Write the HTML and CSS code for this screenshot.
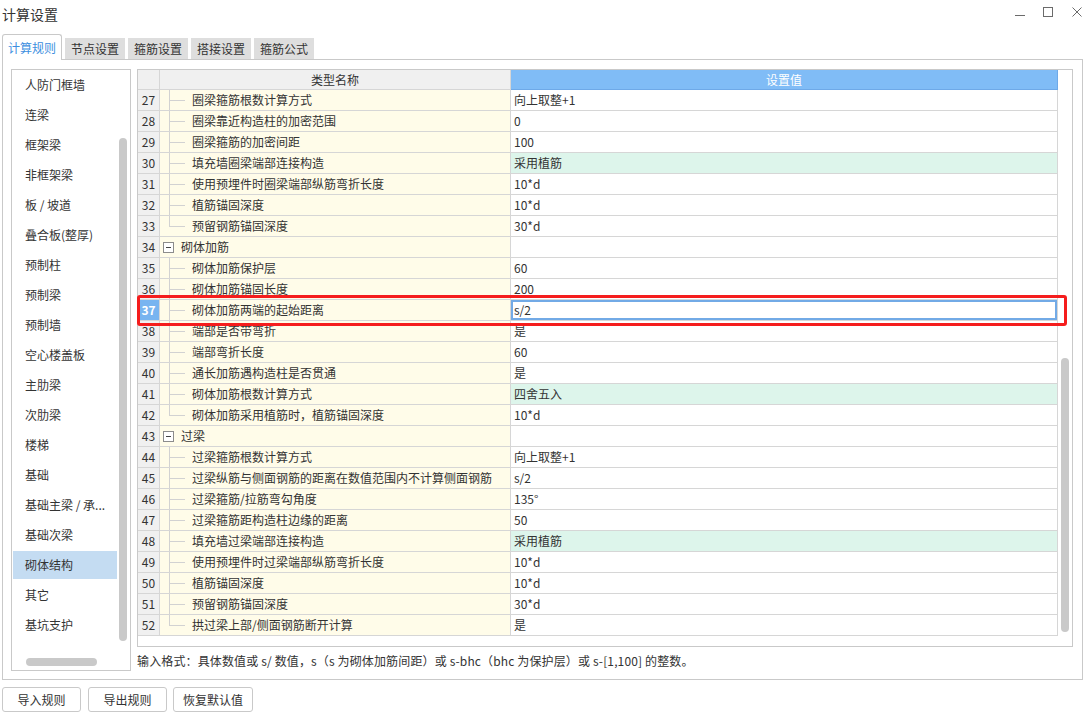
FILE: index.html
```html
<!DOCTYPE html>
<html lang="zh-CN">
<head>
<meta charset="utf-8">
<title>计算设置</title>
<link rel="stylesheet" href="styles.css">
</head>
<body>
<div class="window">
  <header class="titlebar">
    <div class="title">计算设置</div>
    <div class="controls">
      <svg class="ctl" width="10" height="10" viewBox="0 0 10 10"><path d="M0 8.5H10" stroke="#6b6b6b" stroke-width="1"/></svg>
      <svg class="ctl" width="10" height="10" viewBox="0 0 10 10"><rect x="0.5" y="0.5" width="9" height="9" fill="none" stroke="#6b6b6b" stroke-width="1"/></svg>
      <svg class="ctl close" width="10" height="10" viewBox="0 0 10 10"><path d="M0.5 0.5L9.5 9.5M9.5 0.5L0.5 9.5" stroke="#6b6b6b" stroke-width="1"/></svg>
    </div>
  </header>

  <nav class="tabs">
    <div class="tab active">计算规则</div>
    <div class="tab">节点设置</div>
    <div class="tab">箍筋设置</div>
    <div class="tab">搭接设置</div>
    <div class="tab">箍筋公式</div>
  </nav>

  <section class="panel">
    <aside class="sidebar">
      <div class="side-main">
        <ul class="side-list">
          <li class="side-item">人防门框墙</li>
          <li class="side-item">连梁</li>
          <li class="side-item">框架梁</li>
          <li class="side-item">非框架梁</li>
          <li class="side-item">板 / 坡道</li>
          <li class="side-item">叠合板(整厚)</li>
          <li class="side-item">预制柱</li>
          <li class="side-item">预制梁</li>
          <li class="side-item">预制墙</li>
          <li class="side-item">空心楼盖板</li>
          <li class="side-item">主肋梁</li>
          <li class="side-item">次肋梁</li>
          <li class="side-item">楼梯</li>
          <li class="side-item">基础</li>
          <li class="side-item">基础主梁 / 承...</li>
          <li class="side-item">基础次梁</li>
          <li class="side-item sel">砌体结构</li>
          <li class="side-item">其它</li>
          <li class="side-item">基坑支护</li>
        </ul>
        <div class="vscroll"><div class="thumb vthumb"></div></div>
      </div>
      <div class="hscroll"><div class="thumb hthumb"></div></div>
    </aside>

    <div class="content">
      <div class="grid-box">
        <div class="grid">
          <div class="row head">
            <div class="c-num"></div>
            <div class="c-name">类型名称</div>
            <div class="c-val">设置值</div>
          </div>
          <div class="row"><div class="c-num">27</div><div class="c-name"><span class="tree"></span>圈梁箍筋根数计算方式</div><div class="c-val">向上取整+1</div></div>
          <div class="row"><div class="c-num">28</div><div class="c-name"><span class="tree"></span>圈梁靠近构造柱的加密范围</div><div class="c-val">0</div></div>
          <div class="row"><div class="c-num">29</div><div class="c-name"><span class="tree"></span>圈梁箍筋的加密间距</div><div class="c-val">100</div></div>
          <div class="row"><div class="c-num">30</div><div class="c-name"><span class="tree"></span>填充墙圈梁端部连接构造</div><div class="c-val green">采用植筋</div></div>
          <div class="row"><div class="c-num">31</div><div class="c-name"><span class="tree"></span>使用预埋件时圈梁端部纵筋弯折长度</div><div class="c-val">10*d</div></div>
          <div class="row"><div class="c-num">32</div><div class="c-name"><span class="tree"></span>植筋锚固深度</div><div class="c-val">10*d</div></div>
          <div class="row"><div class="c-num">33</div><div class="c-name"><span class="tree last"></span>预留钢筋锚固深度</div><div class="c-val">30*d</div></div>
          <div class="row"><div class="c-num">34</div><div class="c-name group"><span class="toggle"></span>砌体加筋</div><div class="c-val"></div></div>
          <div class="row"><div class="c-num">35</div><div class="c-name"><span class="tree"></span>砌体加筋保护层</div><div class="c-val">60</div></div>
          <div class="row"><div class="c-num">36</div><div class="c-name"><span class="tree"></span>砌体加筋锚固长度</div><div class="c-val">200</div></div>
          <div class="row sel"><div class="c-num">37</div><div class="c-name"><span class="tree"></span>砌体加筋两端的起始距离</div><div class="c-val edit">s/2</div></div>
          <div class="row"><div class="c-num">38</div><div class="c-name"><span class="tree"></span>端部是否带弯折</div><div class="c-val">是</div></div>
          <div class="row"><div class="c-num">39</div><div class="c-name"><span class="tree"></span>端部弯折长度</div><div class="c-val">60</div></div>
          <div class="row"><div class="c-num">40</div><div class="c-name"><span class="tree"></span>通长加筋遇构造柱是否贯通</div><div class="c-val">是</div></div>
          <div class="row"><div class="c-num">41</div><div class="c-name"><span class="tree"></span>砌体加筋根数计算方式</div><div class="c-val green">四舍五入</div></div>
          <div class="row"><div class="c-num">42</div><div class="c-name"><span class="tree last"></span>砌体加筋采用植筋时，植筋锚固深度</div><div class="c-val">10*d</div></div>
          <div class="row"><div class="c-num">43</div><div class="c-name group"><span class="toggle"></span>过梁</div><div class="c-val"></div></div>
          <div class="row"><div class="c-num">44</div><div class="c-name"><span class="tree"></span>过梁箍筋根数计算方式</div><div class="c-val">向上取整+1</div></div>
          <div class="row"><div class="c-num">45</div><div class="c-name"><span class="tree"></span>过梁纵筋与侧面钢筋的距离在数值范围内不计算侧面钢筋</div><div class="c-val">s/2</div></div>
          <div class="row"><div class="c-num">46</div><div class="c-name"><span class="tree"></span>过梁箍筋/拉筋弯勾角度</div><div class="c-val">135°</div></div>
          <div class="row"><div class="c-num">47</div><div class="c-name"><span class="tree"></span>过梁箍筋距构造柱边缘的距离</div><div class="c-val">50</div></div>
          <div class="row"><div class="c-num">48</div><div class="c-name"><span class="tree"></span>填充墙过梁端部连接构造</div><div class="c-val green">采用植筋</div></div>
          <div class="row"><div class="c-num">49</div><div class="c-name"><span class="tree"></span>使用预埋件时过梁端部纵筋弯折长度</div><div class="c-val">10*d</div></div>
          <div class="row"><div class="c-num">50</div><div class="c-name"><span class="tree"></span>植筋锚固深度</div><div class="c-val">10*d</div></div>
          <div class="row"><div class="c-num">51</div><div class="c-name"><span class="tree"></span>预留钢筋锚固深度</div><div class="c-val">30*d</div></div>
          <div class="row"><div class="c-num">52</div><div class="c-name"><span class="tree last"></span>拱过梁上部/侧面钢筋断开计算</div><div class="c-val">是</div></div>
        </div>
        <div class="gscroll"><div class="thumb gthumb"></div></div>
        <div class="highlight"></div>
      </div>
      <p class="hint">输入格式：具体数值或 s/ 数值，s（s 为砌体加筋间距）或 s-bhc（bhc 为保护层）或 s-[1,100] 的整数。</p>
    </div>
  </section>

  <footer class="buttons">
    <button class="btn">导入规则</button>
    <button class="btn">导出规则</button>
    <button class="btn wide">恢复默认值</button>
  </footer>
</div>
</body>
</html>
```

FILE: styles.css
```css
* {
  box-sizing: border-box;
  margin: 0;
  padding: 0;
}

html, body {
  width: 1089px;
  height: 713px;
  overflow: hidden;
  background: #fff;
}

body {
  font-family: "Microsoft YaHei", "Noto Sans CJK SC", sans-serif;
  font-size: 12px;
  color: #333;
}

/* title bar */
.titlebar {
  display: flex;
  justify-content: space-between;
  height: 34px;
}

.title {
  font-size: 14px;
  line-height: 28px;
  padding-left: 2px;
  color: #333;
}

.controls {
  display: flex;
  gap: 18px;
  padding: 7px 7px 0 0;
}

.ctl {
  display: block;
}

.ctl.close {
  margin-left: 1px;
}

/* tabs */
.tabs {
  display: flex;
  align-items: flex-end;
  height: 25px;
  padding-left: 2px;
  gap: 3px;
}

.tab {
  width: 60px;
  height: 21px;
  line-height: 21px;
  text-align: center;
  background: #dedede;
  color: #333;
}

.tab.active {
  position: relative;
  z-index: 1;
  height: 26px;
  margin-bottom: -1px;
  line-height: 25px;
  background: #fff;
  border: 1px solid #c9c9c9;
  border-bottom: none;
  border-radius: 3px 3px 0 0;
  color: #3d8fe0;
}

/* main panel */
.panel {
  display: flex;
  gap: 6px;
  margin-left: 2px;
  width: 1081px;
  height: 621px;
  padding: 9px 0 0 8px;
  border: 1px solid #c9c9c9;
}

/* sidebar */
.sidebar {
  display: flex;
  flex-direction: column;
  width: 120px;
  height: 602px;
  border: 1px solid #c9c9c9;
}

.side-main {
  display: flex;
  height: 580px;
}

.side-list {
  list-style: none;
  width: 104px;
  margin-left: 1px;
  padding-top: 1px;
}

.side-item {
  height: 28px;
  line-height: 28px;
  margin-bottom: 2px;
  padding-left: 12px;
  white-space: nowrap;
  overflow: hidden;
}

.side-item.sel {
  background: #c4dcf2;
}

.thumb {
  background: #c9c9c9;
  border-radius: 4px;
}

.vscroll {
  width: 13px;
  padding: 68px 0 0 2px;
}

.vthumb {
  width: 8px;
  height: 503px;
}

.hscroll {
  height: 20px;
  padding: 8px 0 0 14px;
}

.hthumb {
  width: 71px;
  height: 8px;
}

/* grid */
.content {
  display: flex;
  flex-direction: column;
}

.grid-box {
  position: relative;
  display: flex;
  width: 936px;
  height: 578px;
  border: 1px solid #c9c9c9;
}

.grid {
  width: 920px;
}

.row {
  display: flex;
  height: 21px;
}

.row.head {
  height: 20px;
}

.c-num,
.c-name,
.c-val {
  border-right: 1px solid #d6d6d6;
  border-bottom: 1px solid #d6d6d6;
  line-height: 20px;
  white-space: nowrap;
}

.c-num {
  width: 22px;
  background: #f0f0f0;
  text-align: center;
}

.c-name {
  display: flex;
  width: 351px;
  background: #fffce9;
}

.c-val {
  width: 547px;
  padding-left: 3px;
  background: #fff;
}

.c-val.green {
  background: #ddf5eb;
}

.c-val.edit {
  box-shadow: inset 0 0 0 2px #72aae6;
}

.row.head .c-num,
.row.head .c-name {
  background: #f0f0f0;
  line-height: 19px;
}

.row.head .c-name {
  justify-content: center;
}

.row.head .c-val {
  background: #80bcf6;
  border-color: #6ea9e8;
  color: #fff;
  text-align: center;
  padding-left: 0;
  line-height: 19px;
}

.row.sel .c-num {
  background: #78b4f0;
  color: #fff;
  font-weight: bold;
}

.tree {
  flex: none;
  width: 32px;
  background:
    linear-gradient(#d2d2d2, #d2d2d2) 9px 0 / 1px 100% no-repeat,
    linear-gradient(#d2d2d2, #d2d2d2) 9px 10px / 16px 1px no-repeat;
}

.tree.last {
  background:
    linear-gradient(#d2d2d2, #d2d2d2) 9px 0 / 1px 11px no-repeat,
    linear-gradient(#d2d2d2, #d2d2d2) 9px 10px / 16px 1px no-repeat;
}

.toggle {
  flex: none;
  display: flex;
  align-items: center;
  justify-content: center;
  align-self: center;
  width: 11px;
  height: 11px;
  margin: 0 7px 0 3px;
  border: 1px solid #8c8c8c;
  background: #fff;
}

.toggle::after {
  content: "";
  width: 5px;
  height: 1px;
  background: #444;
}

.gscroll {
  width: 14px;
  padding: 288px 0 0 3px;
}

.gthumb {
  width: 8px;
  height: 274px;
}

.highlight {
  position: absolute;
  left: -1px;
  top: 225px;
  width: 930px;
  height: 31px;
  border: 3px solid #f51d1d;
  border-radius: 3px;
  pointer-events: none;
}

.hint {
  margin-top: 5px;
  line-height: 18px;
  white-space: nowrap;
  letter-spacing: 0.14px;
}

/* buttons */
.buttons {
  display: flex;
  margin-top: 7px;
  padding-left: 2px;
}

.btn {
  width: 79px;
  height: 25px;
  border: 1px solid #c9c9c9;
  border-radius: 3px;
  background: #fff;
  font: inherit;
  color: #333;
  line-height: 23px;
  text-align: center;
}

.btn + .btn {
  margin-left: 7px;
}

.btn.wide {
  width: 80px;
  margin-left: 6px;
}
```
